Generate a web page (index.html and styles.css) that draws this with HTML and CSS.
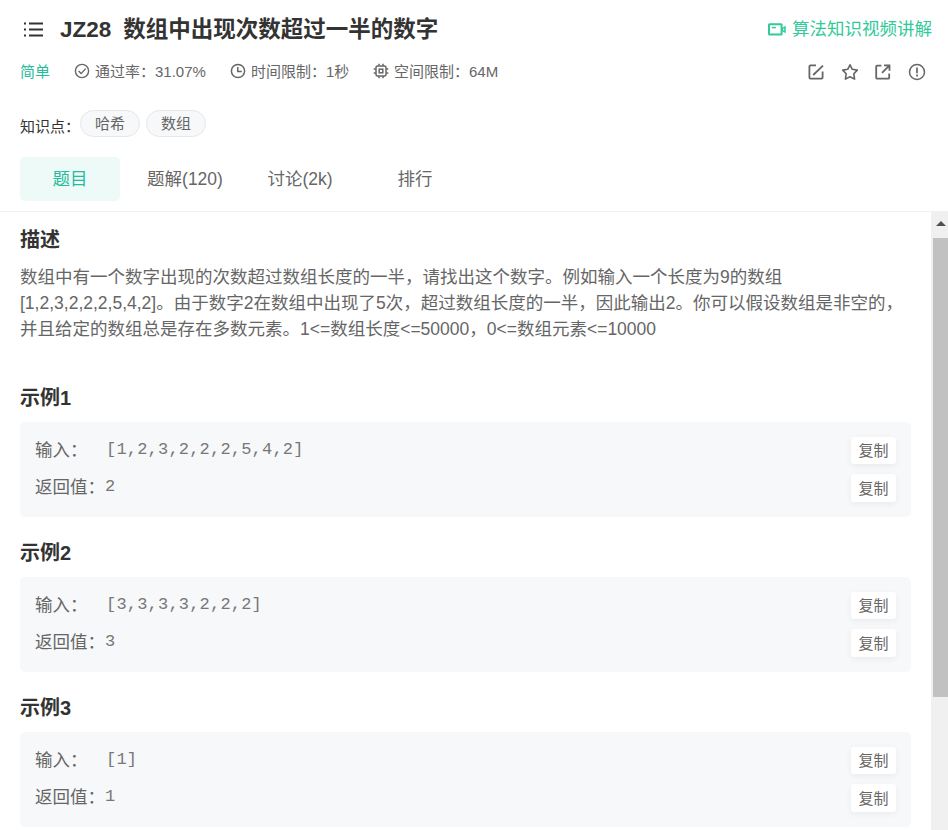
FILE: index.html
```html
<!DOCTYPE html>
<html lang="zh-CN">
<head>
    <meta charset="UTF-8">
    <meta name="viewport" content="width=device-width, initial-scale=1.0">
    <title>JZ28 数组中出现次数超过一半的数字</title>
    <link rel="stylesheet" href="styles.css">
</head>
<body>
    <div class="page">
        <header class="header">
            <div class="title-row">
                <svg class="menu-icon" width="20" height="15" viewBox="0 0 20 15">
                    <path d="M0 1.5h2M5 1.5h14M0 7.5h2M5 7.5h14M0 13.5h2M5 13.5h14" stroke="#333" stroke-width="1.8" fill="none"/>
                </svg>
                <h1><span class="number">JZ28</span>数组中出现次数超过一半的数字</h1>
                <a class="video-link" href="#">
                    <svg width="18" height="13" viewBox="0 0 18 13" fill="none" stroke="#32ca99">
                        <rect x="1" y="1.2" width="12.6" height="10.3" rx="0.5" stroke-width="2"/>
                        <path d="M3.8 4.6h4" stroke-width="1.5"/>
                        <path d="M14.2 5.6L17 4v5l-2.8-1.6z" stroke-width="1.5"/>
                    </svg>
                    <span>算法知识视频讲解</span>
                </a>
            </div>
            <div class="info-row">
                <span class="level">简单</span>
                <span class="info pass">
                    <svg width="16" height="16" viewBox="0 0 16 16" fill="none" stroke="#666" stroke-width="1.4">
                        <circle cx="8" cy="8" r="6.6"/>
                        <path d="M4.6 8l2.5 2.6 4.6-5"/>
                    </svg>
                    通过率：31.07%
                </span>
                <span class="info time">
                    <svg width="16" height="16" viewBox="0 0 16 16" fill="none" stroke="#666" stroke-width="1.5">
                        <circle cx="8" cy="8" r="6.6"/>
                        <path d="M7.8 4v4.5h4"/>
                    </svg>
                    时间限制：1秒
                </span>
                <span class="info space">
                    <svg width="16" height="16" viewBox="0 0 16 16" fill="none" stroke="#666" stroke-width="1.5">
                        <rect x="3" y="3" width="10" height="10" rx="1.5"/>
                        <rect x="6.2" y="6.2" width="3.6" height="3.6"/>
                        <path d="M6 .7v2M10 .7v2M6 13.3v2M10 13.3v2M.7 6h2M.7 10h2M13.3 6h2M13.3 10h2"/>
                    </svg>
                    空间限制：64M
                </span>
                <div class="actions">
                    <svg width="18" height="18" viewBox="0 0 18 18" fill="none" stroke="#666" stroke-width="1.8">
                        <path d="M9 2.4H3.4a1 1 0 0 0-1 1v11.2a1 1 0 0 0 1 1h11.2a1 1 0 0 0 1-1V8.5M6.2 12L16 2.6"/>
                    </svg>
                    <svg width="18" height="18" viewBox="0 0 18 18" fill="none" stroke="#666" stroke-width="1.6" stroke-linejoin="round">
                        <path d="M9 1.8l2.3 4.5 5 .8-3.5 3.7.8 5.3L9 13.8l-4.6 2.3.8-5.3-3.5-3.7 5-.8z"/>
                    </svg>
                    <svg width="18" height="18" viewBox="0 0 18 18" fill="none" stroke="#666" stroke-width="1.8">
                        <path d="M7.4 2.7H3.2a1 1 0 0 0-1 1v11a1 1 0 0 0 1 1h11a1 1 0 0 0 1-1V10.5M10 2.3h5.5v5.5M15.2 2.6L8 9.8"/>
                    </svg>
                    <svg width="18" height="18" viewBox="0 0 18 18" fill="none" stroke="#666" stroke-width="1.5">
                        <circle cx="9" cy="9" r="7.5"/>
                        <path d="M9 4.5v5.8M9 11.6v1.8" stroke-width="1.7"/>
                    </svg>
                </div>
            </div>
            <div class="tag-row">
                <span class="tag-label">知识点：</span>
                <span class="tag">哈希</span>
                <span class="tag">数组</span>
            </div>
            <nav class="tabs">
                <a class="tab active" href="#">题目</a>
                <a class="tab" href="#">题解(120)</a>
                <a class="tab" href="#">讨论(2k)</a>
                <a class="tab" href="#">排行</a>
            </nav>
        </header>
        <div class="body">
            <main class="content">
                <h2>描述</h2>
                <p class="desc">数组中有一个数字出现的次数超过数组长度的一半，请找出这个数字。例如输入一个长度为9的数组<br>[1,2,3,2,2,2,5,4,2]。由于数字2在数组中出现了5次，超过数组长度的一半，因此输出2。你可以假设数组是非空的，<br>并且给定的数组总是存在多数元素。1&lt;=数组长度&lt;=50000，0&lt;=数组元素&lt;=10000</p>
                <section class="example">
                    <h2>示例1</h2>
                    <div class="box">
                        <div class="line"><span class="label">输入：</span><code class="input">[1,2,3,2,2,2,5,4,2]</code><button class="copy">复制</button></div>
                        <div class="line"><span class="label">返回值：</span><code>2</code><button class="copy">复制</button></div>
                    </div>
                </section>
                <section class="example">
                    <h2>示例2</h2>
                    <div class="box">
                        <div class="line"><span class="label">输入：</span><code class="input">[3,3,3,3,2,2,2]</code><button class="copy">复制</button></div>
                        <div class="line"><span class="label">返回值：</span><code>3</code><button class="copy">复制</button></div>
                    </div>
                </section>
                <section class="example">
                    <h2>示例3</h2>
                    <div class="box">
                        <div class="line"><span class="label">输入：</span><code class="input">[1]</code><button class="copy">复制</button></div>
                        <div class="line"><span class="label">返回值：</span><code>1</code><button class="copy">复制</button></div>
                    </div>
                </section>
            </main>
            <div class="scrollbar">
                <div class="arrow"></div>
                <div class="thumb"></div>
            </div>
        </div>
    </div>
</body>
</html>
```
FILE: styles.css
```css
* {
    box-sizing: border-box;
}
body {
    margin: 0;
    font-family: "Liberation Sans", "Noto Sans CJK SC", sans-serif;
    font-size: 17.5px;
    color: #666;
    background: #fff;
    text-spacing-trim: space-all;
}
h1, h2, p {
    margin: 0;
}
a {
    text-decoration: none;
    color: inherit;
}
svg {
    display: block;
    flex-shrink: 0;
}
.page {
    height: 830px;
    display: flex;
    flex-direction: column;
    overflow: hidden;
}
.header {
    height: 212px;
    flex-shrink: 0;
    border-bottom: 1px solid #f0f0f0;
}
.title-row {
    display: flex;
    align-items: center;
    height: 58px;
    padding: 0 16px 0 24px;
}
.menu-icon {
    margin-top: 1px;
    margin-right: 16px;
}
h1 {
    padding-top: 2px;
    font-size: 22.5px;
    line-height: 30px;
    color: #333;
}
.number {
    margin-right: 12px;
}
.video-link {
    display: flex;
    align-items: center;
    gap: 6px;
    margin-left: auto;
    color: #32ca99;
}
.video-link span {
    padding-bottom: 3px;
}
.info-row {
    display: flex;
    align-items: center;
    height: 28px;
    padding: 0 20px;
    font-size: 15px;
    line-height: 24px;
}
.level {
    width: 54px;
    color: #25bb9b;
}
.info {
    display: flex;
    align-items: center;
    gap: 5px;
    white-space: nowrap;
}
.info svg {
    margin-bottom: 2px;
}
.pass {
    width: 156px;
}
.time {
    width: 143px;
}
.actions {
    display: flex;
    gap: 15.7px;
    margin-left: auto;
    margin-right: 2px;
}
.tag-row {
    display: flex;
    height: 51px;
    padding: 24px 20px 0;
    font-size: 15px;
}
.tag-label {
    width: 60px;
    padding-top: 4px;
    line-height: 25px;
    color: #333;
}
.tag {
    width: 60px;
    height: 27px;
    margin-right: 6px;
    border: 1px solid #e4e6eb;
    border-radius: 14px;
    background: #f7f8fa;
    line-height: 25px;
    text-align: center;
}
.tabs {
    display: flex;
    gap: 15px;
    padding: 20px 20px 0;
}
.tab {
    width: 100px;
    height: 44px;
    border-radius: 5px;
    line-height: 44px;
    text-align: center;
    white-space: nowrap;
}
.active {
    background: #eefaf7;
    color: #25bb9b;
}
.body {
    display: flex;
    flex: 1;
    min-height: 0;
}
.content {
    flex: 1;
    padding: 13px 20px 0;
    overflow: hidden;
}
h2 {
    font-size: 20px;
    line-height: 30px;
    color: #333;
}
.desc {
    height: 107px;
    margin-top: 9px;
    line-height: 26px;
    white-space: nowrap;
}
.example {
    padding-top: 12px;
    height: 155px;
}
.box {
    height: 95px;
    margin-top: 9px;
    padding: 15px 15px 0;
    border-radius: 5px;
    background: #f7f8fa;
}
.line {
    display: flex;
    align-items: flex-start;
    height: 37px;
    line-height: 26px;
}
.label {
    width: 70px;
}
code {
    font-family: "Liberation Mono", monospace;
    font-size: 17px;
    letter-spacing: 0.2px;
    color: #777;
}
.input {
    margin-left: 1px;
}
.copy {
    width: 45px;
    height: 27px;
    margin-left: auto;
    padding: 0;
    border: none;
    border-radius: 3px;
    background: #fff;
    box-shadow: 0 2px 6px rgba(0, 0, 0, 0.06);
    font-family: inherit;
    font-size: 15px;
    line-height: 27px;
    color: #666;
}
.line + .line .copy {
    height: 28px;
}
.scrollbar {
    width: 17px;
    background: #f0f0f0;
}
.arrow {
    width: 0;
    height: 0;
    margin: 9px 0 12px 5px;
    border: 5px solid transparent;
    border-top: 0;
    border-bottom-color: #505050;
}
.thumb {
    height: 459px;
    margin-left: 2px;
    background: #c1c1c1;
}
```
